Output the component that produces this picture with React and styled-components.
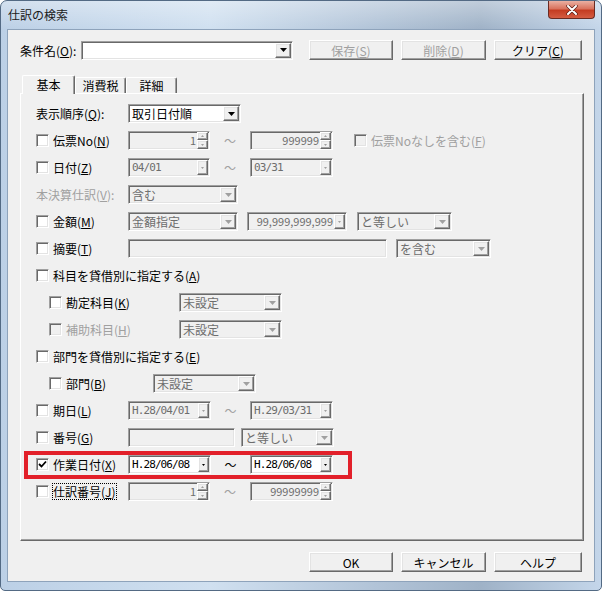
import styled, { createGlobalStyle, css } from "styled-components";

const GlobalStyle = createGlobalStyle`
  body {
    margin: 0;
    background: #ffffff;
    font-family: "Noto Sans CJK JP", "Noto Sans", sans-serif;
    font-size: 12px;
    color: #000;
  }
`;

const sunken = css`
  border: 1px solid;
  border-color: #a0a0a0 #ffffff #ffffff #a0a0a0;
  box-shadow: inset 1px 1px 0 #696969, inset -1px -1px 0 #e3e3e3;
`;

const raised = css`
  border: 1px solid;
  border-color: #ffffff #696969 #696969 #ffffff;
  box-shadow: inset -1px -1px 0 #a0a0a0, inset 1px 1px 0 #e3e3e3;
`;

const Frame = styled.div`
  width: 602px;
  height: 591px;
  box-sizing: border-box;
  display: flex;
  flex-direction: column;
  border: 1px solid #536a84;
  border-radius: 7px 7px 5px 5px;
  overflow: hidden;
  background:
    linear-gradient(to bottom, rgba(255, 255, 255, 0.35), rgba(255, 255, 255, 0) 28px),
    linear-gradient(to right, #bcd0e6 0%, #d0e0f0 35%, #b2c4d8 62%, #9fb2c7 80%, #c4d6ea 100%);
`;

const TitleBar = styled.div`
  height: 28px;
  display: flex;
  justify-content: space-between;
  align-items: flex-start;
  padding: 0 6px 0 7px;
`;

const Title = styled.span`
  margin-top: 6px;
  font-size: 12px;
  line-height: 15px;
  color: #1a1a1a;
`;

const CloseButton = styled.div`
  width: 47px;
  height: 18px;
  box-sizing: border-box;
  border: 1px solid #6a2b22;
  border-top: none;
  border-radius: 0 0 4px 4px;
  background: linear-gradient(#eab0a2, #d9735e 45%, #c43c22 55%, #d45c42);
  display: flex;
  align-items: center;
  justify-content: center;
`;

const Client = styled.div`
  flex: 1;
  margin: 0 6px 8px;
  border: 1px solid #8ea3bb;
  background: #f0f0f0;
  display: flex;
  flex-direction: column;
`;

const TopRow = styled.div`
  display: flex;
  align-items: center;
  height: 20px;
  margin: 10px 12px 0;
`;

const CondLabel = styled.span`
  width: 61px;
  line-height: 15px;
`;

const ButtonBar = styled.div`
  display: flex;
  gap: 8px;
  margin-left: ${(p) => p.$ml || 0}px;
`;

const PushButton = styled.div`
  ${raised};
  box-sizing: border-box;
  width: ${(p) => p.$w}px;
  height: 20px;
  display: flex;
  align-items: center;
  justify-content: center;
  background: #f0f0f0;
  color: ${(p) => (p.$off ? "#a0a0a0" : "#000")};
  line-height: 15px;
`;

const TabStrip = styled.div`
  display: flex;
  align-items: flex-end;
  height: 18px;
  margin: 15px 0 0 14px;
  position: relative;
  z-index: 1;
`;

const Tab = styled.div`
  box-sizing: border-box;
  width: ${(p) => p.$w}px;
  height: ${(p) => (p.$active ? 19 : 16)}px;
  margin-bottom: ${(p) => (p.$active ? -1 : 0)}px;
  border-left: 1px solid #ffffff;
  border-top: 1px solid #ffffff;
  border-right: 1px solid #696969;
  border-radius: 2px 2px 0 0;
  box-shadow: inset -1px 0 0 #a0a0a0;
  background: #f0f0f0;
  display: flex;
  align-items: center;
  justify-content: center;
  line-height: 15px;
  padding-bottom: ${(p) => (p.$active ? 2 : 0)}px;
`;

const Panel = styled.div`
  box-sizing: border-box;
  width: 564px;
  height: 448px;
  margin-left: 12px;
  border: 1px solid;
  border-color: #ffffff #696969 #696969 #ffffff;
  box-shadow: inset -1px -1px 0 #a0a0a0;
  padding: 6px 0 0 15px;
  display: flex;
  flex-direction: column;
`;

const Row = styled.div`
  position: relative;
  display: flex;
  align-items: center;
  height: 27px;
  flex-shrink: 0;

  ${(p) =>
    p.$mark &&
    css`
      &::after {
        content: "";
        position: absolute;
        left: -12px;
        top: 0;
        width: 328px;
        height: 28px;
        box-sizing: border-box;
        border: 4px solid #e2202a;
        pointer-events: none;
      }
    `}
`;

const Lead = styled.div`
  display: flex;
  align-items: center;
  flex-shrink: 0;
  width: ${(p) => p.$w}px;
  margin-left: ${(p) => p.$indent || 0}px;
`;

const CheckBox = styled.div`
  ${sunken};
  box-sizing: border-box;
  width: 13px;
  height: 13px;
  flex-shrink: 0;
  margin-right: 4px;
  background: ${(p) => (p.$off ? "#f0f0f0" : "#ffffff")};
  display: flex;
  align-items: center;
  justify-content: center;
`;

const Label = styled.span`
  line-height: 15px;
  white-space: nowrap;
  color: ${(p) => (p.$off ? "#a0a0a0" : "#000")};
  border: 1px ${(p) => (p.$focus ? "dotted #000" : "solid transparent")};
  margin-left: -1px;
`;

const Field = styled.div`
  ${sunken};
  box-sizing: border-box;
  width: ${(p) => p.$w}px;
  height: 19px;
  flex-shrink: 0;
  margin-left: ${(p) => p.$ml || 0}px;
  display: flex;
  align-items: center;
  padding: 0 1px 0 3px;
  background: ${(p) => (p.$on ? "#ffffff" : "#f0f0f0")};
  color: ${(p) => (p.$on ? "#000" : "#6d6d6d")};
`;

const FieldText = styled.span`
  flex: 1;
  min-width: 0;
  white-space: nowrap;
  text-align: ${(p) => (p.$right ? "right" : "left")};
  padding-right: ${(p) => (p.$right ? 1 : 0)}px;
  font-family: ${(p) => (p.$mono ? '"DejaVu Sans Mono", monospace' : "inherit")};
  font-size: ${(p) => (p.$mono || p.$num ? 11 : 12)}px;
  letter-spacing: ${(p) => (p.$mono ? "-0.9px" : "normal")};
  line-height: 15px;
`;

const DropBtn = styled.div`
  ${raised};
  box-sizing: border-box;
  width: ${(p) => (p.$small ? 11 : 16)}px;
  height: 15px;
  flex-shrink: 0;
  display: flex;
  align-items: center;
  justify-content: center;
  background: #f0f0f0;
`;

const SpinCol = styled.div`
  display: flex;
  flex-direction: column;
  width: 11px;
  height: 17px;
  flex-shrink: 0;
`;

const SpinHalf = styled.div`
  ${raised};
  box-sizing: border-box;
  height: ${(p) => p.$h}px;
  display: flex;
  align-items: center;
  justify-content: center;
  background: #f0f0f0;
`;

const Tilde = styled.span`
  width: ${(p) => p.$w || 40}px;
  flex-shrink: 0;
  text-align: center;
  line-height: 15px;
  color: ${(p) => (p.$on ? "#000" : "#a0a0a0")};
`;

const Spacer = styled.div`
  width: ${(p) => p.$w}px;
  flex-shrink: 0;
`;

const BottomBar = styled.div`
  display: flex;
  justify-content: flex-end;
  margin: 11px 12px 0 0;
`;

function Arrow({ small, up, color }) {
  if (small) {
    return (
      <svg width="3" height="2" viewBox="0 0 3 2">
        <polygon points={up ? "0,2 3,2 1.5,0" : "0,0 3,0 1.5,2"} fill={color} />
      </svg>
    );
  }
  return (
    <svg width="7" height="4" viewBox="0 0 7 4">
      <polygon points="0,0 7,0 3.5,4" fill={color} />
    </svg>
  );
}

function Mark() {
  return (
    <svg width="9" height="9" viewBox="0 0 9 9">
      <polyline points="1,4 3.5,6.5 8,1.5" fill="none" stroke="#000" strokeWidth="1.8" />
    </svg>
  );
}

function Combo({ w, ml, on, text }) {
  return (
    <Field $w={w} $ml={ml} $on={on}>
      <FieldText>{text}</FieldText>
      <DropBtn>
        <Arrow color={on ? "#000" : "#a0a0a0"} />
      </DropBtn>
    </Field>
  );
}

function DateBox({ w, on, text, ml }) {
  return (
    <Field $w={w} $ml={ml} $on={on}>
      <FieldText $mono>{text}</FieldText>
      <DropBtn $small>
        <Arrow small color={on ? "#000" : "#a0a0a0"} />
      </DropBtn>
    </Field>
  );
}

function SpinBox({ w, text }) {
  return (
    <Field $w={w}>
      <FieldText $right $num>
        {text}
      </FieldText>
      <SpinCol>
        <SpinHalf $h={8}>
          <Arrow small up color="#a0a0a0" />
        </SpinHalf>
        <SpinHalf $h={9}>
          <Arrow small color="#a0a0a0" />
        </SpinHalf>
      </SpinCol>
    </Field>
  );
}

function AmountBox({ w, ml, text }) {
  return (
    <Field $w={w} $ml={ml}>
      <FieldText $right $num>
        {text}
      </FieldText>
      <DropBtn $small>
        <Arrow small color="#a0a0a0" />
      </DropBtn>
    </Field>
  );
}

function Check({ w = 92, indent, off, checked, focus, children }) {
  return (
    <Lead $w={w} $indent={indent}>
      <CheckBox $off={off}>{checked && <Mark />}</CheckBox>
      <Label $off={off} $focus={focus}>
        {children}
      </Label>
    </Lead>
  );
}

export default function App() {
  return (
    <>
      <GlobalStyle />
      <Frame>
        <TitleBar>
          <Title>仕訳の検索</Title>
          <CloseButton>
            <svg width="12" height="10" viewBox="0 0 12 10">
              <path
                d="M2 1 L10 9 M10 1 L2 9"
                stroke="#5a1e16"
                strokeWidth="3.4"
                strokeLinecap="round"
              />
              <path
                d="M2 1 L10 9 M10 1 L2 9"
                stroke="#ffffff"
                strokeWidth="2"
                strokeLinecap="round"
              />
            </svg>
          </CloseButton>
        </TitleBar>

        <Client>
          <TopRow>
            <CondLabel>
              条件名(<u>O</u>):
            </CondLabel>
            <Combo w={212} on text="" />
            <ButtonBar $ml={16}>
              <PushButton $w={84} $off>
                保存(<u>S</u>)
              </PushButton>
              <PushButton $w={85} $off>
                削除(<u>D</u>)
              </PushButton>
              <PushButton $w={88}>
                クリア(<u>C</u>)
              </PushButton>
            </ButtonBar>
          </TopRow>

          <TabStrip>
            <Tab $w={53} $active>
              基本
            </Tab>
            <Tab $w={51}>消費税</Tab>
            <Tab $w={51}>詳細</Tab>
          </TabStrip>

          <Panel>
            <Row>
              <Lead $w={92}>
                <Label>
                  表示順序(<u>Q</u>):
                </Label>
              </Lead>
              <Combo w={113} on text="取引日付順" />
            </Row>

            <Row>
              <Check>
                伝票No(<u>N</u>)
              </Check>
              <SpinBox w={82} text="1" />
              <Tilde>～</Tilde>
              <SpinBox w={83} text="999999" />
              <Spacer $w={21} />
              <Check off w={200}>
                伝票Noなしを含む(<u>F</u>)
              </Check>
            </Row>

            <Row>
              <Check>
                日付(<u>Z</u>)
              </Check>
              <DateBox w={82} text="04/01" />
              <Tilde>～</Tilde>
              <DateBox w={83} text="03/31" />
            </Row>

            <Row>
              <Lead $w={92}>
                <Label $off>
                  本決算仕訳(<u>V</u>):
                </Label>
              </Lead>
              <Combo w={110} text="含む" />
            </Row>

            <Row>
              <Check>
                金額(<u>M</u>)
              </Check>
              <Combo w={110} text="金額指定" />
              <AmountBox w={100} ml={9} text="99,999,999,999" />
              <Combo w={95} ml={10} text="と等しい" />
            </Row>

            <Row>
              <Check>
                摘要(<u>T</u>)
              </Check>
              <Field $w={259} />
              <Combo w={95} ml={9} text="を含む" />
            </Row>

            <Row>
              <Check w={400}>
                科目を貸借別に指定する(<u>A</u>)
              </Check>
            </Row>

            <Row>
              <Check indent={13} w={130}>
                勘定科目(<u>K</u>)
              </Check>
              <Combo w={103} text="未設定" />
            </Row>

            <Row>
              <Check indent={13} w={130} off>
                補助科目(<u>H</u>)
              </Check>
              <Combo w={103} text="未設定" />
            </Row>

            <Row>
              <Check w={400}>
                部門を貸借別に指定する(<u>E</u>)
              </Check>
            </Row>

            <Row>
              <Check indent={13} w={104}>
                部門(<u>B</u>)
              </Check>
              <Combo w={103} text="未設定" />
            </Row>

            <Row>
              <Check>
                期日(<u>L</u>)
              </Check>
              <DateBox w={83} text="H.28/04/01" />
              <Tilde $w={39}>～</Tilde>
              <DateBox w={83} text="H.29/03/31" />
            </Row>

            <Row>
              <Check>
                番号(<u>G</u>)
              </Check>
              <Field $w={107} />
              <Combo w={93} ml={6} text="と等しい" />
            </Row>

            <Row $mark>
              <Check checked>
                作業日付(<u>X</u>)
              </Check>
              <DateBox w={83} on text="H.28/06/08" />
              <Tilde $w={39} $on>
                ～
              </Tilde>
              <DateBox w={83} on text="H.28/06/08" />
            </Row>

            <Row>
              <Check focus>
                仕訳番号(<u>J</u>)
              </Check>
              <SpinBox w={82} text="1" />
              <Tilde>～</Tilde>
              <SpinBox w={83} text="99999999" />
            </Row>
          </Panel>

          <BottomBar>
            <ButtonBar>
              <PushButton $w={84}>OK</PushButton>
              <PushButton $w={85}>キャンセル</PushButton>
              <PushButton $w={88}>ヘルプ</PushButton>
            </ButtonBar>
          </BottomBar>
        </Client>
      </Frame>
    </>
  );
}
